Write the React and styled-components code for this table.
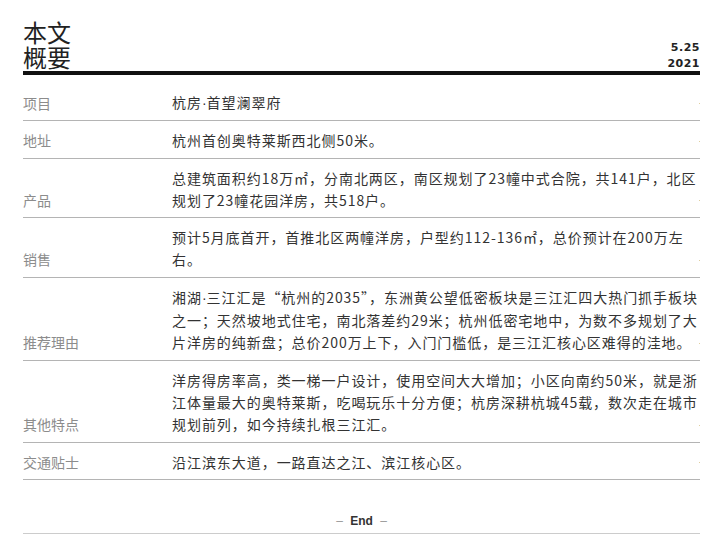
import styled, { createGlobalStyle } from 'styled-components';

const GlobalStyle = createGlobalStyle`
    body {
        margin: 0;
        background: #fff;
        font-family: "Noto Sans CJK SC", "Noto Sans", sans-serif;
    }
`

// dati della tabella riassuntiva, righe già spezzate come nel layout originale
const rows = [
    { label: '项目', lines: [['杭房', '·', '首望澜翠府']] },
    { label: '地址', lines: ['杭州首创奥特莱斯西北侧50米。'] },
    { label: '产品', lines: [
        '总建筑面积约18万㎡，分南北两区，南区规划了23幢中式合院，共141户，北区',
        '规划了23幢花园洋房，共518户。',
    ] },
    { label: '销售', lines: [
        '预计5月底首开，首推北区两幢洋房，户型约112-136㎡，总价预计在200万左',
        '右。',
    ] },
    { label: '推荐理由', lines: [
        ['湘湖', '·', '三江汇是“杭州的2035”，东洲黄公望低密板块是三江汇四大热门抓手板块'],
        '之一；天然坡地式住宅，南北落差约29米；杭州低密宅地中，为数不多规划了大',
        '片洋房的纯新盘；总价200万上下，入门门槛低，是三江汇核心区难得的洼地。',
    ] },
    { label: '其他特点', lines: [
        '洋房得房率高，类一梯一户设计，使用空间大大增加；小区向南约50米，就是浙',
        '江体量最大的奥特莱斯，吃喝玩乐十分方便；杭房深耕杭城45载，数次走在城市',
        '规划前列，如今持续扎根三江汇。',
    ] },
    { label: '交通贴士', lines: ['沿江滨东大道，一路直达之江、滨江核心区。'] },
]

// il punto centrale va reso stretto, come nel carattere latino
const renderLine = (line) => {
    if (typeof line === 'string') return line
    return line.map((part, i) => part === '·' ? <MidDot key={i}>·</MidDot> : part)
}

function App() {
    return (
        <>
        <GlobalStyle />
        <Page>
            <Header>
                <Title>本文<br />概要</Title>
                <DateBox>5.25<br />2021</DateBox>
            </Header>

            <Table>
                {rows.map((r, i) => (
                    <Row key={i} first={i === 0}>
                        <Label>{r.label}</Label>
                        <Content>
                            {r.lines.map((l, j) => (
                                <Line key={j}>{renderLine(l)}</Line>
                            ))}
                        </Content>
                        <Dot />
                    </Row>
                ))}
            </Table>

            <EndMark>
                <Dash>–</Dash> End <Dash>–</Dash>
            </EndMark>
        </Page>
        </>
    )
}

const Page = styled.div`
    width: 677px;
    margin-left: 23px;
    padding-top: 19px;
`

const Header = styled.div`
    display: flex;
    justify-content: space-between;
    align-items: flex-end;
    border-bottom: 4px solid #111;
    padding-bottom: 2px;
`

const Title = styled.div`
    font-size: 24px;
    line-height: 25px;
    color: #222;
`

const DateBox = styled.div`
    font-family: "DejaVu Sans", sans-serif;
    font-weight: bold;
    font-size: 11px;
    line-height: 16px;
    color: #222;
    text-align: right;
    letter-spacing: 0.5px;
    margin-bottom: -3px;
`

const Table = styled.div`
    display: flex;
    flex-direction: column;
`

const Row = styled.div`
    display: grid;
    grid-template-columns: 149px 1fr 1px;
    border-bottom: 1px solid #b4b4b4;
    padding: ${props => props.first ? '16px 0 6px' : '8px 0 6px'};
    font-size: 14px;
    line-height: 22.3px;
`

const Label = styled.div`
    color: #8c8c8c;
    align-self: end;
`

const Content = styled.div`
    color: #333;
    letter-spacing: 0.95px;
`

const Line = styled.div`
    white-space: nowrap;
`

const MidDot = styled.span`
    font-family: "Liberation Sans", sans-serif;
    letter-spacing: 0;
`

const Dot = styled.div`
    width: 1px;
    height: 1px;
    background: #e0cfa0;
    align-self: end;
    margin-bottom: 10px;
`

const EndMark = styled.div`
    text-align: center;
    font-family: "Liberation Sans", sans-serif;
    font-weight: bold;
    font-size: 12px;
    color: #333;
    padding: 34px 0 5px;
    border-bottom: 1px solid #ccc;
`

const Dash = styled.span`
    color: #999;
    font-weight: normal;
    margin: 0 4px;
`

export default App
